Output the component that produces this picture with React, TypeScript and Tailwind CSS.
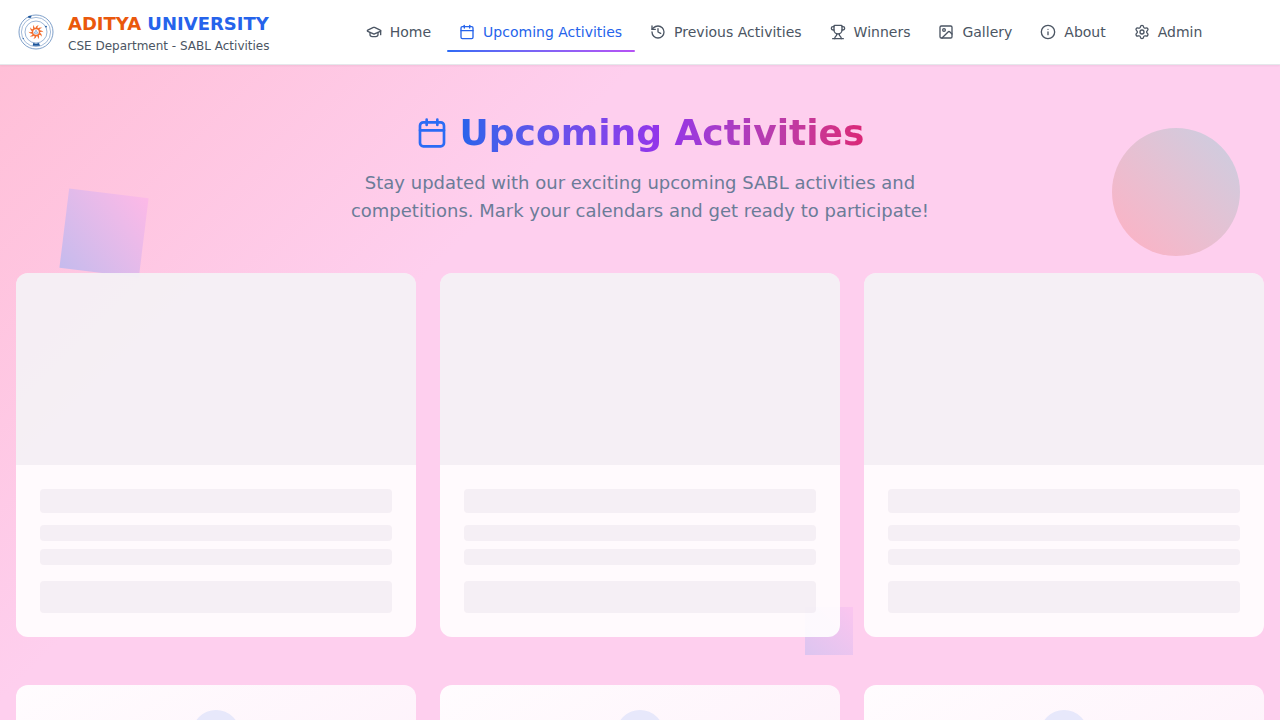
import React from "react";
import { GraduationCap, Calendar, History, Trophy, Image, Info, Settings, type LucideIcon } from "lucide-react";

const navItems: { label: string; icon: LucideIcon; active?: boolean }[] = [
  { label: "Home", icon: GraduationCap },
  { label: "Upcoming Activities", icon: Calendar, active: true },
  { label: "Previous Activities", icon: History },
  { label: "Winners", icon: Trophy },
  { label: "Gallery", icon: Image },
  { label: "About", icon: Info },
  { label: "Admin", icon: Settings },
];

function Logo() {
  const rays = Array.from({ length: 10 }, (_, i) => i * 36);
  return (
    <svg viewBox="0 0 40 40" className="h-10 w-10 shrink-0" fill="none">
      <circle cx="20" cy="20" r="17" stroke="#5d86bb" strokeWidth="0.8" />
      <circle cx="20" cy="20" r="14.6" stroke="#7c9dc9" strokeWidth="0.7" />
      <circle cx="20" cy="20" r="11" stroke="#6f94c4" strokeWidth="0.7" />
      {rays.map((r) => (
        <path key={r} d="M18.9 16.4 Q18.8 14 21.6 12.6 Q20.4 14.4 20.9 16.4Z" fill="#f26b2c" transform={`rotate(${r + 8} 20 20)`} />
      ))}
      <circle cx="20" cy="20" r="3.5" stroke="#f26b2c" strokeWidth="1.4" />
      <path d="M20 18.2 L21.7 21.2 H18.3Z" stroke="#4d83c4" strokeWidth="0.6" />
      <path d="M12.2 5.5 L15.5 5.2 L15 7.2 L12.4 7.5Z" fill="#1c559b" transform="translate(0 -1.4)" />
      <path d="M17.2 31 L20 31.8 L23 31 L24 33.8 H16.7Z" fill="#1c559b" />
      <circle cx="30" cy="14.6" r="0.9" fill="#1c559b" />
      <circle cx="7.3" cy="26.5" r="0.7" fill="#3f72b3" />
    </svg>
  );
}

function TitleCalendar() {
  return (
    <svg
      viewBox="0 0 24 24"
      className="h-8 w-8 text-[#2b6bf5]"
      fill="none"
      stroke="currentColor"
      strokeWidth="2"
      strokeLinecap="round"
      strokeLinejoin="round"
    >
      <path d="M8 2v4M16 2v4M3 10h18" />
      <rect x="3" y="4" width="18" height="18" rx="2.5" />
    </svg>
  );
}

function Header() {
  return (
    <header className="relative z-20 flex h-[65px] shrink-0 items-center border-b border-gray-200 bg-white pl-4 shadow-xs">
      <div className="flex w-[337.75px] items-center gap-3">
        <Logo />
        <div className="whitespace-nowrap">
          <div className="text-lg leading-7 font-bold text-[#2563eb]">
            <span className="text-[#ea580c]">ADITYA</span> UNIVERSITY
          </div>
          <div className="text-xs leading-4 text-[#4b5563]">CSE Department - SABL Activities</div>
        </div>
      </div>
      <nav className="flex gap-1">
        {navItems.map(({ label, icon: Icon, active }) => (
          <a
            key={label}
            className={
              active
                ? "relative flex h-9 items-center gap-2 px-3 text-sm whitespace-nowrap text-[#2563eb]"
                : "relative flex h-9 items-center gap-2 px-3 text-sm whitespace-nowrap text-[#4b5563]"
            }
          >
            <Icon size={16} />
            {label}
            {active && (
              <span className="absolute -right-px -bottom-0.5 left-[0.4px] h-0.5 rounded-full bg-linear-to-r from-[#2b6bf5] to-[#b652f5]" />
            )}
          </a>
        ))}
      </nav>
    </header>
  );
}

function SkeletonCard() {
  return (
    <div className="overflow-hidden rounded-xl bg-white/90">
      <div className="h-48 bg-[#e5dfe9]/40" />
      <div className="p-6">
        <div className="mb-3 h-6 rounded bg-[#e5dfe9]/40" />
        <div className="mb-2 h-4 rounded bg-[#e5dfe9]/40" />
        <div className="mb-4 h-4 rounded bg-[#e5dfe9]/40" />
        <div className="h-8 rounded bg-[#e5dfe9]/40" />
      </div>
    </div>
  );
}

export default function App() {
  return (
    <div className="flex h-screen flex-col overflow-hidden bg-[#fecfef] font-['DejaVu_Sans',sans-serif]">
      <Header />
      <main className="relative flex-1 bg-[linear-gradient(135deg,#ffbfd7_0px,#fecfee_450px)] px-4 pt-10">
        <div className="absolute top-32 left-16 h-20 w-20 rotate-[7deg] bg-linear-to-tr from-[#c5bbed] to-[#fdb9e7]" />
        <div className="absolute top-[62.6px] right-10 h-32 w-32 rounded-full bg-linear-to-tr from-[#ffb0c3] to-[#c8cfe2]" />
        <div className="absolute top-[542px] left-[805px] h-12 w-12 bg-linear-to-tr from-[#dcc5f0] to-[#fbc5ef]" />

        <div className="relative">
          <section className="mx-auto flex max-w-2xl flex-col items-center text-center">
            <h1 className="mb-4 flex items-center gap-3 text-4xl leading-[56px] font-bold whitespace-nowrap">
              <TitleCalendar />
              <span className="bg-linear-to-r from-[#2563eb] via-[#9333ea] to-[#db2777] bg-clip-text text-transparent">
                Upcoming Activities
              </span>
            </h1>
            <p className="-mt-2 text-lg leading-7 text-[#6b7c98]">
              Stay updated with our exciting upcoming SABL activities and
              <br />
              competitions. Mark your calendars and get ready to participate!
            </p>
          </section>
          <section className="mt-12 grid grid-cols-3 gap-6">
            <SkeletonCard />
            <SkeletonCard />
            <SkeletonCard />
          </section>
          <section className="mt-12 grid grid-cols-3 gap-6">
            {[0, 1, 2].map((i) => (
              <div key={i} className="flex h-64 justify-center rounded-xl bg-linear-to-br from-[#fffcfe] to-[#fdedf9] pt-[25px]">
                <div className="h-12 w-12 rounded-full bg-[#e7e8fb]" />
              </div>
            ))}
          </section>
        </div>
      </main>
    </div>
  );
}
